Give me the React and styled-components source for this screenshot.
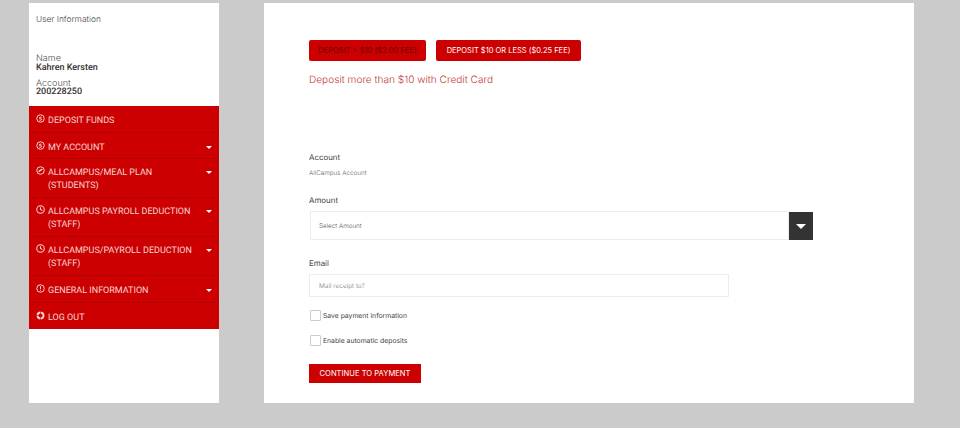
import styled, { createGlobalStyle } from "styled-components"

const Global = createGlobalStyle`
  html, body { margin: 0; padding: 0; }
  body {
    background: #cbcbcb;
    font-family: Inter, Roboto, "Liberation Sans", sans-serif;
    font-weight: 300;
    text-rendering: geometricPrecision;
  }
`

const Page = styled.div`
  display: flex;
  gap: 45px;
  width: 960px;
  height: 428px;
  box-sizing: border-box;
  padding: 3px 0 0 29px;
`

const Sidebar = styled.aside`
  width: 190px;
  height: 400px;
  background: #fff;
  flex-shrink: 0;
`

const UserInfo = styled.div`
  height: 103px;
  box-sizing: border-box;
  padding: 11px 7px 0;
  color: #333;
`

const UserTitle = styled.div`
  font-size: 8.4px;
  line-height: 12px;
  margin-bottom: 29px;
  color: #444;
`

const UserField = styled.div`
  font-size: 9px;
  line-height: 8.5px;
  margin-bottom: 7px;
  color: #555;
`

const UserValue = styled.div`
  font-family: Roboto, "Liberation Sans", sans-serif;
  font-size: 9px;
  line-height: 9px;
  font-weight: 500;
  color: #333;
`

const Menu = styled.nav`
  display: flex;
  flex-direction: column;
  background: #cc0000;
`

const Item = styled.div`
  display: flex;
  align-items: flex-start;
  height: ${p => p.$h}px;
  box-sizing: border-box;
  padding: ${p => (p.$h < 30 ? 8 : 7)}px 7px 0 7px;
  border-bottom: ${p => (p.$last ? "none" : "1px solid #b80000")};
  color: #f8d4d4;
  font-family: Roboto, "Liberation Sans", sans-serif;
  font-size: 9px;
  font-weight: 400;
  line-height: 12.5px;
`

const ItemIcon = styled.svg`
  width: 9px;
  height: 9px;
  margin-right: 3px;
  flex-shrink: 0;
`

const ItemText = styled.span`
  flex: 1;
  padding-top: 1px;
`

const Caret = styled.span`
  width: 0;
  height: 0;
  margin: 5px 0 0 0;
  border-left: 3px solid transparent;
  border-right: 3px solid transparent;
  border-top: 3px solid #fff;
`

const Main = styled.main`
  width: 650px;
  height: 400px;
  background: #fff;
  box-sizing: border-box;
  padding: 37px 45px 0;
`

const Tabs = styled.div`
  display: flex;
  gap: 10px;
`

const Tab = styled.button`
  height: 21px;
  width: ${p => p.$w}px;
  padding: 0;
  border: none;
  border-radius: 2px;
  background: #cc0000;
  color: ${p => (p.$dim ? "#780000" : "#fff")};
  font-family: Inter, Roboto, "Liberation Sans", sans-serif;
  font-size: 7.5px;
  font-weight: ${p => (p.$dim ? 500 : 400)};
`

const Heading = styled.div`
  margin-top: 12px;
  font-size: 10.1px;
  line-height: 15px;
  color: #c23a3a;
`

const Label = styled.div`
  font-size: 7.9px;
  line-height: 12px;
  font-weight: 400;
  color: #444;
  margin-top: ${p => p.$mt}px;
`

const Static = styled.div`
  font-size: 6.3px;
  line-height: 10px;
  margin-top: 5px;
  color: #666;
`

const SelectRow = styled.div`
  display: flex;
  width: 504px;
  height: 29px;
  margin-top: 5px;
`

const SelectBox = styled.div`
  flex: 1;
  margin-left: 1px;
  display: flex;
  align-items: center;
  padding-left: 8px;
  border: 1px solid #ececec;
  font-size: 6.3px;
  color: #555;
`

const SelectButton = styled.div`
  width: 24px;
  height: 28px;
  margin-top: 1px;
  background: #333;
  display: flex;
  align-items: center;
  justify-content: center;
`

const BigCaret = styled.span`
  width: 0;
  height: 0;
  border-left: 5px solid transparent;
  border-right: 5px solid transparent;
  border-top: 5px solid #fff;
`

const InputBox = styled.div`
  width: 420px;
  height: 23px;
  box-sizing: border-box;
  margin-top: 5px;
  padding-left: 9px;
  display: flex;
  align-items: center;
  border: 1px solid #ececec;
  font-size: 6.5px;
  color: #777;
`

const CheckRow = styled.label`
  display: flex;
  align-items: center;
  gap: 2px;
  margin-top: ${p => p.$mt}px;
  margin-left: 1px;
  font-size: 6.8px;
  font-weight: 400;
  height: 11px;
  color: #444;
`

const Box = styled.span`
  width: 9px;
  height: 9px;
  border: 1px solid #ccc;
  border-radius: 1px;
`

const Submit = styled.button`
  display: block;
  margin-top: 18px;
  width: 112px;
  height: 19px;
  padding: 0;
  border: none;
  background: #cc0000;
  color: #fff;
  font-family: Inter, Roboto, "Liberation Sans", sans-serif;
  font-size: 7.6px;
  font-weight: 400;
`

const Dollar = () => (
  <ItemIcon viewBox="0 0 24 24" fill="none" stroke="currentColor" strokeWidth="2.6">
    <circle cx="12" cy="12" r="10" />
    <path d="M15 8.5H11a2 2 0 0 0 0 4h2a2 2 0 0 1 0 4H9" />
  </ItemIcon>
)

const Slash = () => (
  <ItemIcon viewBox="0 0 24 24" fill="none" stroke="currentColor" strokeWidth="2.6">
    <circle cx="12" cy="12" r="10" />
    <path d="M7 15 17 8" strokeWidth="4" />
  </ItemIcon>
)

const Clock = () => (
  <ItemIcon viewBox="0 0 24 24" fill="none" stroke="currentColor" strokeWidth="2.8">
    <circle cx="12" cy="12" r="10" />
    <path d="M12 6v6l5 3" />
  </ItemIcon>
)

const Info = () => (
  <ItemIcon viewBox="0 0 24 24" fill="none" stroke="currentColor" strokeWidth="2.6">
    <circle cx="12" cy="12" r="10" />
    <path d="M12 6v8M12 16v2" />
  </ItemIcon>
)

const Ring = () => (
  <ItemIcon viewBox="0 0 24 24" fill="none" stroke="currentColor" strokeWidth="5">
    <circle cx="12" cy="12" r="8" strokeDasharray="11 1.6" />
  </ItemIcon>
)

const items = [
  { icon: Dollar, text: "DEPOSIT FUNDS", h: 27 },
  { icon: Dollar, text: "MY ACCOUNT", h: 26, caret: true },
  { icon: Slash, text: <>ALLCAMPUS/MEAL PLAN<br />(STUDENTS)</>, h: 39, caret: true },
  { icon: Clock, text: <>ALLCAMPUS PAYROLL DEDUCTION<br />(STAFF)</>, h: 39, caret: true },
  { icon: Clock, text: <>ALLCAMPUS/PAYROLL DEDUCTION<br />(STAFF)</>, h: 39, caret: true },
  { icon: Info, text: "GENERAL INFORMATION", h: 27, caret: true },
  { icon: Ring, text: "LOG OUT", h: 26, last: true },
]

export default function App() {
  return (
    <Page>
      <Global />
      <Sidebar>
        <UserInfo>
          <UserTitle>User Information</UserTitle>
          <UserField>
            Name
            <UserValue>Kahren Kersten</UserValue>
          </UserField>
          <UserField>
            Account
            <UserValue>200228250</UserValue>
          </UserField>
        </UserInfo>
        <Menu>
          {items.map((item, i) => (
            <Item key={i} $h={item.h} $last={item.last}>
              <item.icon />
              <ItemText>{item.text}</ItemText>
              {item.caret && <Caret />}
            </Item>
          ))}
        </Menu>
      </Sidebar>
      <Main>
        <Tabs>
          <Tab $w={117} $dim>DEPOSIT &gt; $10 ($2.00 FEE)</Tab>
          <Tab $w={145}>DEPOSIT $10 OR LESS ($0.25 FEE)</Tab>
        </Tabs>
        <Heading>Deposit more than $10 with Credit Card</Heading>
        <Label $mt={63}>Account</Label>
        <Static>AllCampus Account</Static>
        <Label $mt={16}>Amount</Label>
        <SelectRow>
          <SelectBox>Select Amount</SelectBox>
          <SelectButton><BigCaret /></SelectButton>
        </SelectRow>
        <Label $mt={17}>Email</Label>
        <InputBox>Mail receipt to?</InputBox>
        <CheckRow $mt={13}><Box />Save payment information</CheckRow>
        <CheckRow $mt={14}><Box />Enable automatic deposits</CheckRow>
        <Submit>CONTINUE TO PAYMENT</Submit>
      </Main>
    </Page>
  )
}
